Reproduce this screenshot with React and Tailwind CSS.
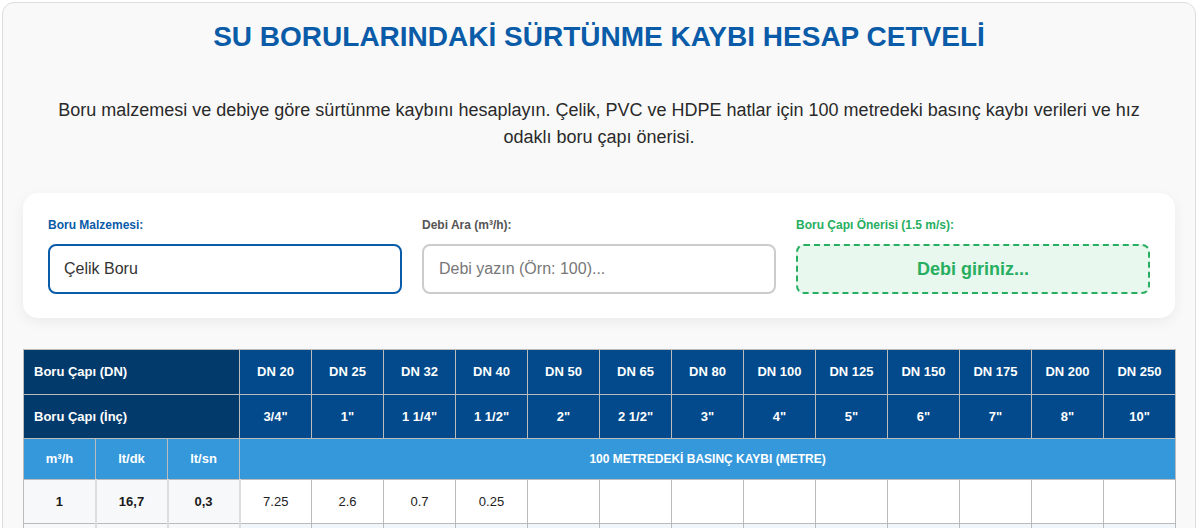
import React from "react";

const DN = ["DN 20","DN 25","DN 32","DN 40","DN 50","DN 65","DN 80","DN 100","DN 125","DN 150","DN 175","DN 200","DN 250"];
const INCH = ['3/4"','1"','1 1/4"','1 1/2"','2"','2 1/2"','3"','4"','5"','6"','7"','8"','10"'];

const ROWS = [
  ["1", "16,7", "0,3", ["7.25", "2.6", "0.7", "0.25"]],
  ["2", "33,3", "0,6", ["26", "9.3", "2.5", "0.9", "0.3"]],
  ["3", "50,0", "0,8", ["", "19.5", "5.2", "1.9", "0.6", "0.2"]],
  ["4", "66,7", "1,1", ["", "33", "8.9", "3.3", "1.0", "0.3"]],
];

export default function App() {
  return (
    <div className="min-h-screen bg-white pt-[2px] px-[2px]" style={{ fontFamily: '"Liberation Sans", Arial, sans-serif' }}>
      <div className="bg-[#f9f9f9] border border-[#dddddd] rounded-[12px] px-[20px] pt-[18px] pb-[30px]">
        <h1 className="text-center text-[28px] leading-[32px] font-bold text-[#0a5ba8]">
          SU BORULARINDAKİ SÜRTÜNME KAYBI HESAP CETVELİ
        </h1>
        <p className="mt-[44px] px-[22px] text-center text-[18px] leading-[27px] text-[#2a2a2a]">
          Boru malzemesi ve debiye göre sürtünme kaybını hesaplayın. Çelik, PVC ve HDPE hatlar için 100 metredeki basınç kaybı verileri ve hız odaklı boru çapı önerisi.
        </p>

        <div className="mt-[42px] bg-white rounded-[15px] shadow-[0_4px_14px_rgba(0,0,0,0.06)] px-[25px] pt-[25px] pb-[24px] grid grid-cols-3 gap-[20px]">
          <div>
            <div className="text-[12px] leading-[14px] h-[14px] font-bold text-[#0a5ba8] mb-[12px]">Boru Malzemesi:</div>
            <div className="h-[50px] border-2 border-[#0a5ba8] rounded-[8px] bg-white flex items-center pl-[14px] text-[16px] text-[#333333]">
              Çelik Boru
            </div>
          </div>
          <div>
            <div className="text-[12px] leading-[14px] h-[14px] font-bold text-[#555555] mb-[12px]">Debi Ara (m³/h):</div>
            <div className="h-[50px] border-2 border-[#cccccc] rounded-[8px] bg-white flex items-center pl-[15px] text-[16px] text-[#777777]">
              Debi yazın (Örn: 100)...
            </div>
          </div>
          <div>
            <div className="text-[12px] leading-[14px] h-[14px] font-bold text-[#27ae60] mb-[12px]">Boru Çapı Önerisi (1.5 m/s):</div>
            <div className="h-[50px] border-2 border-dashed border-[#27ae60] rounded-[8px] bg-[#e8f8ee] flex items-center justify-center text-[18px] font-bold text-[#27ae60]">
              Debi giriniz...
            </div>
          </div>
        </div>

        <table className="mt-[31px] w-[1152px] table-fixed border-collapse text-[13px]">
          <colgroup>
            {Array.from({ length: 16 }).map((_, i) => (
              <col key={i} className="w-[72px]" />
            ))}
          </colgroup>
          <thead>
            <tr className="h-[45px]">
              <th colSpan={3} className="bg-[#033a6c] border border-[#bbbbbb] text-left pl-[10px] text-white font-bold">Boru Çapı (DN)</th>
              {DN.map((d) => (
                <th key={d} className="bg-[#024a8b] border border-[#bbbbbb] text-center text-white font-bold">{d}</th>
              ))}
            </tr>
            <tr className="h-[44px]">
              <th colSpan={3} className="bg-[#033a6c] border border-[#bbbbbb] text-left pl-[10px] text-white font-bold">Boru Çapı (İnç)</th>
              {INCH.map((d) => (
                <th key={d} className="bg-[#024a8b] border border-[#bbbbbb] text-center text-white font-bold">{d}</th>
              ))}
            </tr>
            <tr className="h-[41px]">
              <th className="bg-[#3498db] border border-[#bbbbbb] text-center text-white font-bold">m³/h</th>
              <th className="bg-[#3498db] border border-[#bbbbbb] text-center text-white font-bold">lt/dk</th>
              <th className="bg-[#3498db] border border-[#bbbbbb] text-center text-white font-bold">lt/sn</th>
              <th colSpan={13} className="bg-[#3498db] border border-[#bbbbbb] text-center text-white font-bold text-[12px]">100 METREDEKİ BASINÇ KAYBI (METRE)</th>
            </tr>
          </thead>
          <tbody>
            {ROWS.map(([a, b, c, vals], ri) => (
              <tr key={a} className="h-[44px]">
                <td className="bg-[#f7f8fa] border border-[#bbbbbb] border-r-2 border-r-[#dddddd] text-center font-bold text-[#1a1a1a]">{a}</td>
                <td className="bg-[#f7f8fa] border border-[#bbbbbb] border-r-2 border-r-[#dddddd] text-center font-bold text-[#1a1a1a]">{b}</td>
                <td className="bg-[#f7f8fa] border border-[#bbbbbb] border-r-2 border-r-[#dddddd] text-center font-bold text-[#1a1a1a]">{c}</td>
                {Array.from({ length: 13 }).map((_, i) => (
                  <td
                    key={i}
                    className={
                      "border border-[#bbbbbb] text-center text-[#222222] " +
                      (ri % 2 === 1 ? "bg-[#f1f6fb]" : "bg-white")
                    }
                  >
                    {vals[i] || ""}
                  </td>
                ))}
              </tr>
            ))}
          </tbody>
        </table>
      </div>
    </div>
  );
}
